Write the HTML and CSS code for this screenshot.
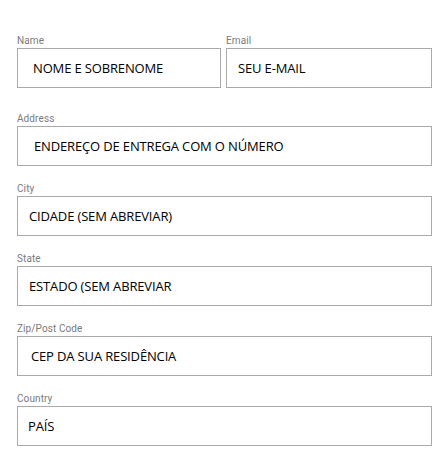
FILE: index.html
```html
<!DOCTYPE html>
<html lang="pt">
<head>
<meta charset="utf-8">
<title>Shipping form</title>
<link rel="stylesheet" href="styles.css">
</head>
<body>
<form class="form">
  <div class="row">
    <div class="field field-name">
      <label class="label">Name</label>
      <div class="box pad-5">NOME E SOBRENOME</div>
    </div>
    <div class="field field-email">
      <label class="label">Email</label>
      <div class="box pad-1">SEU E-MAIL</div>
    </div>
  </div>
  <div class="field">
    <label class="label">Address</label>
    <div class="box pad-6">ENDEREÇO DE ENTREGA COM O NÚMERO</div>
  </div>
  <div class="field">
    <label class="label">City</label>
    <div class="box pad-1">CIDADE (SEM ABREVIAR)</div>
  </div>
  <div class="field">
    <label class="label">State</label>
    <div class="box pad-1">ESTADO (SEM ABREVIAR</div>
  </div>
  <div class="field">
    <label class="label">Zip/Post Code</label>
    <div class="box pad-3">CEP DA SUA RESIDÊNCIA</div>
  </div>
  <div class="field">
    <label class="label">Country</label>
    <div class="box">PAÍS</div>
  </div>
</form>
</body>
</html>
```
FILE: styles.css
```css
html, body {
  margin: 0;
  padding: 0;
  background: #ffffff;
}
.form {
  width: 415px;
  padding: 35px 0 0 17px;
  display: flex;
  flex-direction: column;
  gap: 17px;
}
.row {
  display: flex;
  gap: 5px;
  margin-bottom: 8px;
}
.field {
  display: flex;
  flex-direction: column;
  gap: 1px;
}
.field-name {
  width: 204px;
}
.field-email {
  width: 206px;
}
.label {
  font-family: Roboto, "Liberation Sans", sans-serif;
  font-size: 10px;
  line-height: 12px;
  color: #7a7a7a;
  letter-spacing: 0.1px;
}
.box {
  box-sizing: border-box;
  height: 40px;
  border: 1px solid #a9a9a9;
  padding: 0 0 0 10px;
  display: flex;
  align-items: center;
  font-family: "Open Sans", "Noto Sans", sans-serif;
  font-size: 13px;
  letter-spacing: -0.15px;
  color: #000000;
  white-space: nowrap;
}
.pad-1 { padding-left: 11px; }
.pad-3 { padding-left: 13px; }
.pad-5 { padding-left: 15px; }
.pad-6 { padding-left: 16px; }
```
